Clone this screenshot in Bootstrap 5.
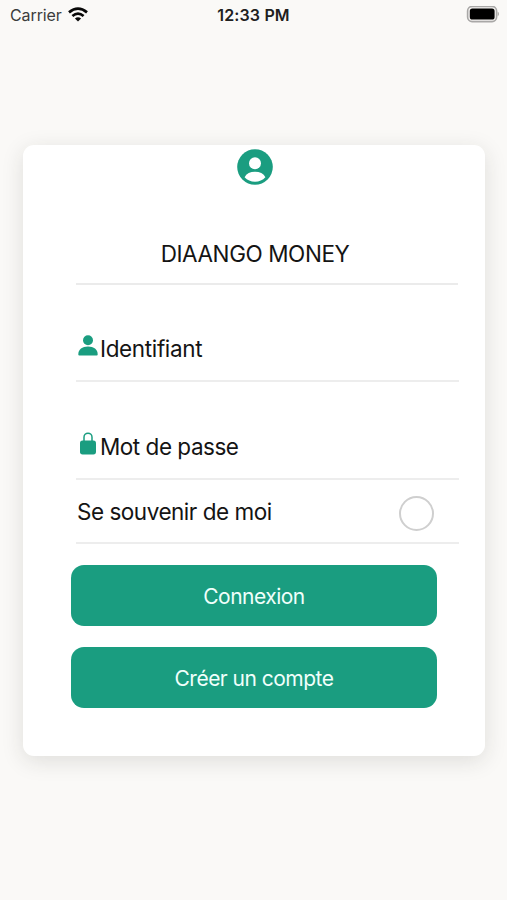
<!DOCTYPE html>
<html lang="fr">
<head>
<meta charset="utf-8">
<meta name="viewport" content="width=device-width, initial-scale=1">
<title>Diaango Money</title>
<link href="https://cdn.jsdelivr.net/npm/bootstrap@5.3.0/dist/css/bootstrap.min.css" rel="stylesheet">
<style>
:root { --brand: #1a9d80; }
body { background: #faf9f7; color: #141414; font-family: Inter, "Liberation Sans", sans-serif; font-size: 22.5px; line-height: 30px; min-height: 900px; overflow: hidden; }
svg { display: block; flex: none; }
.status-bar { height: 30px; padding: 0 8px 0 10px; font-size: 16px; line-height: 30px; }
.status-side { flex: 1 1 0; }
.carrier { color: #3c3c3c; letter-spacing: -.1px; }
.wifi { margin-left: 6px; margin-top: -2px; }
.clock { letter-spacing: .15px; color: #202020; margin: 0 1px 0 -1px; }
.login-card { margin: 115px 22px 0 23px; height: 611px; border-radius: 11px; box-shadow: 0 5px 22px rgba(40, 36, 32, .13); }
.card-head { height: 140px; margin: 0 27px 0 53px; border-bottom: 2px solid #ebebeb; padding-bottom: 14px; }
.avatar { margin: 4px 0 0 -25px; }
.app-title { letter-spacing: -.42px; margin-right: 24px; }
.field { margin: 0 26px 0 53px; border-bottom: 2px solid #ededed; letter-spacing: -.48px; }
.field-input { height: 97px; padding-bottom: 16px; }
.field-input + .field-input { height: 98px; }
.field-name { letter-spacing: -.36px; }
.field-remember { height: 64px; padding: 2px 25px 0 1px; }
.check-circle { width: 35px; height: 35px; margin: 2px 0 0; border: 2px solid #cfcfcf; background: #fff; }
.check-circle:checked { background-color: var(--brand); border-color: var(--brand); }
.actions { margin: 21px 48px 0; gap: 21px; }
.btn-brand { --bs-btn-color: #f0fffb; --bs-btn-bg: var(--brand); --bs-btn-hover-color: #fff; --bs-btn-hover-bg: #158a70; --bs-btn-active-bg: #127860; --bs-btn-active-color: #fff; height: 61px; border: 0; border-radius: 13px; font-size: 21px; letter-spacing: -.52px; padding: 2px 0 0; }
</style>
</head>
<body>
<header class="status-bar d-flex align-items-center">
  <div class="status-side d-flex align-items-center">
    <span class="carrier">Carrier</span>
    <svg class="wifi" width="20" height="15" viewBox="0 0 20 15" fill="none" stroke="#080808" stroke-width="2.7" aria-hidden="true">
      <path d="M1 5.4Q10 -2.2 19 5.4"/><path d="M4.4 9Q10 4.3 15.6 9"/><path d="M10 14.6 6.9 11.6Q10 9 13.1 11.6Z" fill="#080808" stroke="none"/>
    </svg>
  </div>
  <span class="clock fw-semibold">12:33 PM</span>
  <div class="status-side d-flex justify-content-end">
    <svg width="33" height="18" viewBox="0 0 33 18" aria-hidden="true">
      <rect x="1.6" y="0.4" width="29" height="15.2" rx="4.5" fill="#f4f2f0" stroke="#a9a8a7" stroke-width="1.6"/>
      <rect x="3.8" y="2.5" width="24.8" height="11" rx="2.6" fill="#000"/>
      <path d="M31.7 5.8Q33 6.4 33 8T31.7 10.2Z" fill="#a9a8a7"/>
    </svg>
  </div>
</header>

<main class="login-card card border-0">
  <div class="card-head d-flex flex-column align-items-center justify-content-between">
    <svg class="avatar" width="36" height="36" viewBox="0 0 36 36" aria-hidden="true">
      <circle cx="18" cy="18" r="17.8" fill="#1a9d80"/>
      <circle cx="18" cy="14.2" r="6" fill="#fff"/>
      <path d="M7.6 28.2C9.4 24.6 13.2 22.8 18 22.8S26.6 24.6 28.4 28.2C25.8 31.1 22.1 32.7 18 32.7S10.2 31.1 7.6 28.2Z" fill="#fff"/>
    </svg>
    <span class="app-title">DIAANGO MONEY</span>
  </div>
  <div class="field field-input d-flex align-items-end">
    <svg width="24" height="30" viewBox="0 0 24 30" fill="#1a9d80" aria-hidden="true">
      <circle cx="12" cy="6.3" r="5"/>
      <path d="M2.3 20.4C2.3 15.6 6.2 12.6 12 12.6S21.7 15.6 21.7 20.4Q21.7 21.4 20.7 21.4H3.3Q2.3 21.4 2.3 20.4Z"/>
    </svg>
    <span class="field-name">Identifiant</span>
  </div>
  <div class="field field-input d-flex align-items-end">
    <svg width="24" height="30" viewBox="0 0 24 30" aria-hidden="true">
      <rect x="4" y="8.6" width="16" height="13.8" rx="2.6" fill="#1a9d80"/>
      <path d="M8 10V5.2a4 4 0 0 1 8 0V10" fill="none" stroke="#1a9d80" stroke-width="1.5"/>
    </svg>
    <span>Mot de passe</span>
  </div>
  <div class="field field-remember d-flex align-items-center justify-content-between">
    <label for="remember">Se souvenir de moi</label>
    <input class="check-circle form-check-input rounded-circle" type="checkbox" id="remember">
  </div>
  <div class="actions d-grid">
    <button type="button" class="btn btn-brand">Connexion</button>
    <button type="button" class="btn btn-brand">Créer un compte</button>
  </div>
</main>
<script src="https://cdn.jsdelivr.net/npm/bootstrap@5.3.0/dist/js/bootstrap.bundle.min.js"></script>
</body>
</html>
